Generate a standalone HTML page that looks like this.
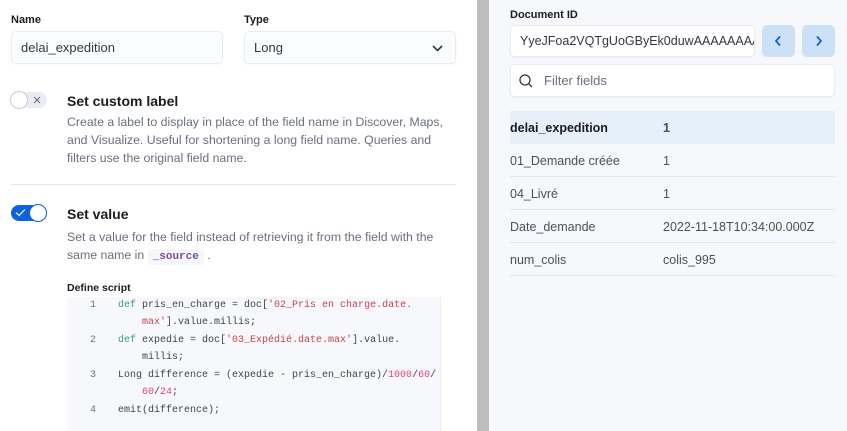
<!DOCTYPE html>
<html><head><meta charset="utf-8"><style>
*{box-sizing:border-box;margin:0;padding:0}
body{width:847px;height:431px;overflow:hidden;position:relative;background:#fff;font-family:"Liberation Sans",Arial,sans-serif;color:#343741}
.abs{position:absolute}
.lbl{font-size:11px;font-weight:bold;color:#1a1c21}
.inp{background:#fbfcfd;border:1px solid #e9edf3;border-radius:5px;box-shadow:0 1px 2px rgba(0,0,0,.04);font-size:13px;color:#343741;padding-left:9px;display:flex;align-items:center}
.title{font-size:14px;font-weight:bold;color:#1a1c21}
.desc{font-size:12.3px;color:#69707d;line-height:18px}
.code{font-family:"Liberation Mono",monospace;font-size:10px;color:#3f4450}
.ln{position:absolute;left:90px;color:#69707d}
.cl{position:absolute;left:118px;white-space:pre}
.kw{color:#3e9a8a}.st{color:#c2464a}.nu{color:#e7408a}
.row{position:absolute;left:510px;width:325px;height:33px;border-bottom:1px solid #e3e6ec;font-size:12.5px;color:#4a4f5a}
.row span{position:absolute;top:10px}
</style></head><body>
<div class="abs lbl" style="left:11px;top:14px">Name</div>
<div class="abs lbl" style="left:244px;top:14px">Type</div>
<div class="abs inp" style="left:11px;top:31px;width:212px;height:33px">delai_expedition</div>
<div class="abs inp" style="left:244px;top:31px;width:212px;height:33px">Long
<svg class="abs" style="right:11px;top:11px" width="13" height="10" viewBox="0 0 13 10"><path d="M2 3l4.5 4.5L11 3" fill="none" stroke="#343741" stroke-width="1.6"/></svg></div>

<div class="abs" style="left:11px;top:92px;width:36px;height:16px;border-radius:8px;background:#e9edf3"></div>
<div class="abs" style="left:10px;top:91px;width:18px;height:18px;border-radius:50%;background:#fff;border:1px solid #c9ced6"></div>
<svg class="abs" style="left:32px;top:95px" width="10" height="10" viewBox="0 0 10 10"><path d="M2 2l6 6M8 2l-6 6" stroke="#69707d" stroke-width="1.1"/></svg>
<div class="abs title" style="left:67px;top:93px">Set custom label</div>
<div class="abs desc" style="left:67px;top:113px;width:385px">Create a label to display in place of the field name in Discover, Maps, and Visualize. Useful for shortening a long field name. Queries and filters use the original field name.</div>
<div class="abs" style="left:11px;top:184px;width:445px;height:1px;background:#e3e6ec"></div>

<div class="abs" style="left:11px;top:205px;width:36px;height:16px;border-radius:8px;background:#0b64dd"></div>
<div class="abs" style="left:29px;top:204px;width:18px;height:18px;border-radius:50%;background:#fff;border:1px solid #0b64dd"></div>
<svg class="abs" style="left:15px;top:208px" width="11" height="9" viewBox="0 0 11 9"><path d="M1 4.5l3 3L10 1.5" fill="none" stroke="#fff" stroke-width="1.2"/></svg>
<div class="abs title" style="left:67px;top:206px">Set value</div>
<div class="abs desc" style="left:67px;top:228px;width:385px">Set a value for the field instead of retrieving it from the field with the same name in <span style="font-family:'Liberation Mono',monospace;font-size:11px;color:#7a4fa3;background:#f5f7fa;padding:2px 5px;font-weight:bold">_source</span> .</div>

<div class="abs lbl" style="left:67px;top:282px;font-size:10.5px">Define script</div>
<div class="abs" style="left:67px;top:297px;width:373px;height:134px;background:#f7f8fb"></div>
<div class="abs" style="left:440px;top:297px;width:11px;height:134px;background:#fff;border-left:1px solid #eceef2"></div>
<div class="code">
<span class="abs ln" style="top:300px">1</span><span class="abs cl" style="top:300px"><span class="kw">def</span> pris_en_charge = doc[<span class="st">'02_Pris en charge.date.</span></span>
<span class="abs cl" style="top:317px;left:142px"><span class="st">max'</span>].value.millis;</span>
<span class="abs ln" style="top:335px">2</span><span class="abs cl" style="top:335px"><span class="kw">def</span> expedie = doc[<span class="st">'03_Expédié.date.max'</span>].value.</span>
<span class="abs cl" style="top:352px;left:142px">millis;</span>
<span class="abs ln" style="top:370px">3</span><span class="abs cl" style="top:370px">Long difference = (expedie - pris_en_charge)/<span class="nu">1000</span>/<span class="nu">60</span>/</span>
<span class="abs cl" style="top:387px;left:142px"><span class="nu">60</span>/<span class="nu">24</span>;</span>
<span class="abs ln" style="top:405px">4</span><span class="abs cl" style="top:405px">emit(difference);</span>
</div>

<div class="abs" style="left:477px;top:0;width:12px;height:431px;background:#bdbdbd"></div>
<div class="abs" style="left:489px;top:0;width:358px;height:431px;background:#f7f8fc"></div>
<div class="abs lbl" style="left:510px;top:9px">Document ID</div>
<div class="abs inp" style="left:510px;top:25px;width:245px;height:32px;background:#fff;overflow:hidden;white-space:nowrap;font-size:12.5px">YyeJFoa2VQTgUoGByEk0duwAAAAAAAA</div>
<div class="abs" style="left:762px;top:25px;width:33px;height:32px;border-radius:5px;background:#cce1f5"></div>
<div class="abs" style="left:802px;top:25px;width:33px;height:32px;border-radius:5px;background:#cce1f5"></div>
<svg class="abs" style="left:773px;top:35px" width="10" height="12" viewBox="0 0 10 12"><path d="M7 1.5L3 6l4 4.5" fill="none" stroke="#0b64dd" stroke-width="1.8"/></svg>
<svg class="abs" style="left:814px;top:35px" width="10" height="12" viewBox="0 0 10 12"><path d="M3 1.5L7 6l-4 4.5" fill="none" stroke="#0b64dd" stroke-width="1.8"/></svg>
<div class="abs inp" style="left:510px;top:64px;width:325px;height:33px;background:#fff;padding-left:33px;color:#69707d">Filter fields</div>
<svg class="abs" style="left:518px;top:73px" width="16" height="16" viewBox="0 0 16 16"><circle cx="7" cy="7" r="5" fill="none" stroke="#343741" stroke-width="1.3"/><path d="M10.5 10.5l3.5 3.5" stroke="#343741" stroke-width="1.3"/></svg>

<div class="row" style="top:111px;background:#e6f0f8;border-bottom:none"><span style="left:0;font-weight:bold;color:#1a1c21">delai_expedition</span><span style="left:153px;font-weight:bold">1</span></div>
<div class="row" style="top:144px"><span style="left:0">01_Demande créée</span><span style="left:153px">1</span></div>
<div class="row" style="top:177px"><span style="left:0">04_Livré</span><span style="left:153px">1</span></div>
<div class="row" style="top:210px"><span style="left:0">Date_demande</span><span style="left:153px">2022-11-18T10:34:00.000Z</span></div>
<div class="row" style="top:243px"><span style="left:0">num_colis</span><span style="left:153px">colis_995</span></div>
</body></html>
